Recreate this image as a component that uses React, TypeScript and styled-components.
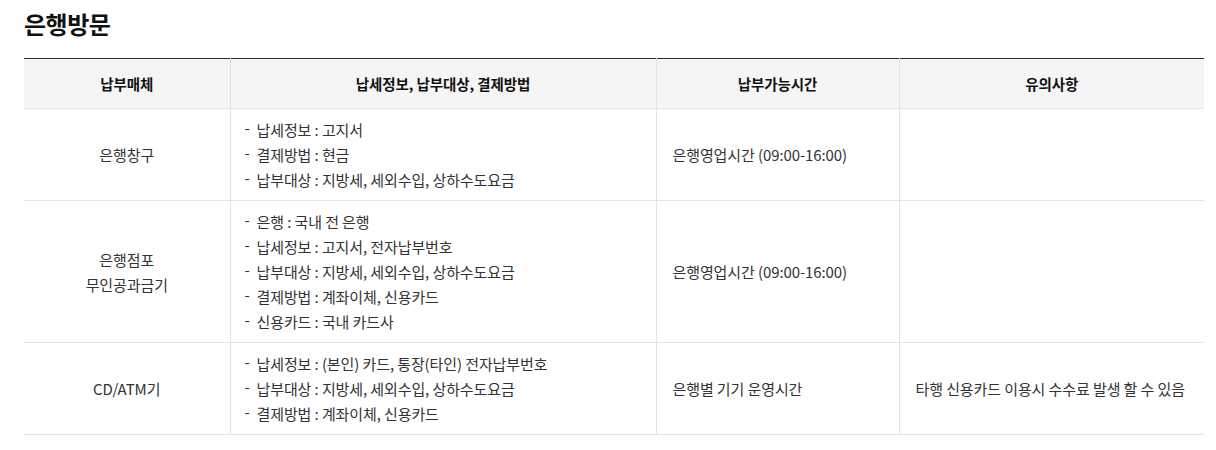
import React from 'react'
import styled, { createGlobalStyle } from 'styled-components'

const GlobalStyle = createGlobalStyle`
  html, body {
    margin: 0;
    padding: 0;
    background: #fff;
  }
  body {
    font-family: "Noto Sans CJK KR", "Noto Sans", sans-serif;
    color: #333;
  }
`

const Section = styled.section`
  padding: 8px 12px 0 24px;
`

const Title = styled.h2`
  margin: 0 0 18px;
  font-size: 24px;
  font-weight: 700;
  line-height: 32px;
  color: #111;
  letter-spacing: -0.5px;
`

const Table = styled.table`
  width: 1180px;
  border-collapse: collapse;
  table-layout: fixed;
  border-top: 1px solid #2b2a40;
  font-size: 15px;
  letter-spacing: -0.1px;
`

const Th = styled.th`
  height: 49px;
  padding: 0 16px;
  background: #f5f5f5;
  font-size: 14.5px;
  font-weight: 700;
  color: #111;
  text-align: center;
  border-bottom: 1px solid #e3e3e3;
  border-left: 1px solid #e3e3e3;
  &:first-child {
    border-left: 0;
  }
`

const Td = styled.td<{ align?: 'center' | 'left' }>`
  padding: 8px 16px;
  text-align: ${(p) => p.align || 'left'};
  vertical-align: middle;
  line-height: 25px;
  color: #333;
  border-bottom: 1px solid #e3e3e3;
  border-left: 1px solid #e3e3e3;
  &:first-child {
    border-left: 0;
  }
`

const DashList = styled.ul`
  list-style: none;
  margin: 0 0 0 -2px;
  padding: 0;
`

const DashItem = styled.li`
  position: relative;
  padding-left: 12px;
  &::before {
    content: '-';
    position: absolute;
    left: 0;
    top: -2px;
  }
`

type Row = {
  media: string[]
  info: string[]
  time: string
  note: string
}

const rows: Row[] = [
  {
    media: ['은행창구'],
    info: ['납세정보 : 고지서', '결제방법 : 현금', '납부대상 : 지방세, 세외수입, 상하수도요금'],
    time: '은행영업시간 (09:00-16:00)',
    note: '',
  },
  {
    media: ['은행점포', '무인공과금기'],
    info: [
      '은행 : 국내 전 은행',
      '납세정보 : 고지서, 전자납부번호',
      '납부대상 : 지방세, 세외수입, 상하수도요금',
      '결제방법 : 계좌이체, 신용카드',
      '신용카드 : 국내 카드사',
    ],
    time: '은행영업시간 (09:00-16:00)',
    note: '',
  },
  {
    media: ['CD/ATM기'],
    info: ['납세정보 : (본인) 카드, 통장(타인) 전자납부번호', '납부대상 : 지방세, 세외수입, 상하수도요금', '결제방법 : 계좌이체, 신용카드'],
    time: '은행별 기기 운영시간',
    note: '타행 신용카드 이용시 수수료 발생 할 수 있음',
  },
]

export default function App() {
  return (
    <>
      <GlobalStyle />
      <Section>
        <Title>은행방문</Title>
        <Table>
          <colgroup>
            <col style={{ width: 206 }} />
            <col style={{ width: 426 }} />
            <col style={{ width: 243 }} />
            <col />
          </colgroup>
          <thead>
            <tr>
              <Th>납부매체</Th>
              <Th>납세정보, 납부대상, 결제방법</Th>
              <Th>납부가능시간</Th>
              <Th>유의사항</Th>
            </tr>
          </thead>
          <tbody>
            {rows.map((r, i) => (
              <tr key={i}>
                <Td align="center">
                  {r.media.map((m, j) => (
                    <div key={j}>{m}</div>
                  ))}
                </Td>
                <Td>
                  <DashList>
                    {r.info.map((t, j) => (
                      <DashItem key={j}>{t}</DashItem>
                    ))}
                  </DashList>
                </Td>
                <Td>{r.time}</Td>
                <Td>{r.note}</Td>
              </tr>
            ))}
          </tbody>
        </Table>
      </Section>
    </>
  )
}
